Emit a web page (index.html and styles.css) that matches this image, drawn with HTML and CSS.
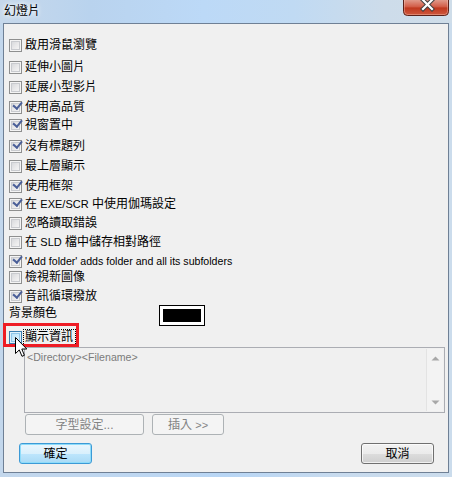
FILE: index.html
```html
<!DOCTYPE html>
<html lang="zh-Hant">
<head>
<meta charset="utf-8">
<title>幻燈片</title>
<link rel="stylesheet" href="styles.css">
</head>
<body>
<div class="window">
  <div class="titlebar">
    <span class="title">幻燈片</span>
    <div class="close">
      <svg width="46" height="16" viewBox="0 0 46 16">
        <defs>
          <linearGradient id="red" x1="0" y1="0" x2="0" y2="1">
            <stop offset="0" stop-color="#e2a293"/>
            <stop offset="0.45" stop-color="#d3604b"/>
            <stop offset="0.55" stop-color="#c0391f"/>
            <stop offset="1" stop-color="#cf5a3f"/>
          </linearGradient>
        </defs>
        <path d="M0.5 -1 V11.5 a4 4 0 0 0 4 4 H41.5 a4 4 0 0 0 4 -4 V-1" fill="url(#red)" stroke="#5b2119"/>
        <path d="M1.5 -1 V11.5 a3 3 0 0 0 3 3 H41.5 a3 3 0 0 0 3 -3 V-1" fill="none" stroke="rgba(255,220,210,0.35)"/>
        <path d="M20 0 L29 9 M29 0 L20 9" stroke="#3f3f3f" stroke-width="4.2" stroke-linecap="square"/>
        <path d="M20 0 L29 9 M29 0 L20 9" stroke="#ffffff" stroke-width="2.2" stroke-linecap="square"/>
      </svg>
    </div>
  </div>
  <div class="client">
    <div class="options">
      <div class="row"><span class="cb"></span><span class="txt">啟用滑鼠瀏覽</span></div>
      <div class="row"><span class="cb"></span><span class="txt">延伸小圖片</span></div>
      <div class="row"><span class="cb"></span><span class="txt">延展小型影片</span></div>
      <div class="row"><span class="cb checked"></span><span class="txt">使用高品質</span></div>
      <div class="row"><span class="cb checked"></span><span class="txt">視窗置中</span></div>
      <div class="row"><span class="cb checked"></span><span class="txt">沒有標題列</span></div>
      <div class="row"><span class="cb"></span><span class="txt">最上層顯示</span></div>
      <div class="row"><span class="cb checked"></span><span class="txt">使用框架</span></div>
      <div class="row"><span class="cb checked"></span><span class="txt">在 <span class="lat">EXE/SCR</span> 中使用伽瑪設定</span></div>
      <div class="row"><span class="cb"></span><span class="txt">忽略讀取錯誤</span></div>
      <div class="row"><span class="cb"></span><span class="txt">在 <span class="lat">SLD</span> 檔中儲存相對路徑</span></div>
      <div class="row"><span class="cb checked"></span><span class="txt lat">'Add folder' adds folder and all its subfolders</span></div>
      <div class="row"><span class="cb"></span><span class="txt">檢視新圖像</span></div>
      <div class="row"><span class="cb checked"></span><span class="txt">音訊循環撥放</span></div>
      <div class="row color-row"><span class="txt label">背景顏色</span><span class="swatch"></span></div>
      <div class="row hl-row">
        <span class="cb hover"></span><span class="txt focus">顯示資訊</span>
        <span class="redmark"></span>
        <svg class="cursor" width="13" height="21" viewBox="0 0 13 21">
          <path d="M0.5 0.5 L0.5 16.5 L4.3 12.9 L7 19.3 L9.4 18.3 L6.8 12 L11.8 12 Z" fill="#fff" stroke="#000" stroke-width="1" stroke-linejoin="miter"/>
        </svg>
      </div>
    </div>
    <div class="memo">
      <div class="memo-text">&lt;Directory&gt;&lt;Filename&gt;</div>
      <div class="scroll">
        <svg width="9" height="5" viewBox="0 0 9 5"><path d="M4.5 0.5 L8.5 4.5 L0.5 4.5 Z" fill="#a8a8a8"/></svg>
        <svg width="9" height="5" viewBox="0 0 9 5"><path d="M0.5 0.5 L8.5 0.5 L4.5 4.5 Z" fill="#a8a8a8"/></svg>
      </div>
    </div>
    <div class="tools">
      <button class="btn disabled font-btn">字型設定...</button>
      <button class="btn disabled insert-btn">插入 <span class="lat">&gt;&gt;</span></button>
    </div>
    <div class="actions">
      <button class="btn default">確定</button>
      <button class="btn">取消</button>
    </div>
  </div>
</div>
</body>
</html>
```

FILE: styles.css
```css
* { box-sizing: border-box; }

html, body {
  margin: 0;
  padding: 0;
}

body {
  width: 452px;
  height: 477px;
  overflow: hidden;
  font-family: "Liberation Sans", "Noto Sans CJK TC", sans-serif;
  font-size: 12px;
  color: #000;
  background: linear-gradient(to right, #c3d7ec 0%, #bdd7f2 35%, #b8d6f5 50%, #c8dbee 75%, #cbdcec 100%);
}

.window {
  display: flex;
  flex-direction: column;
  width: 452px;
  height: 477px;
}

.titlebar {
  height: 23px;
  display: flex;
  align-items: flex-start;
  background: linear-gradient(to right, #c6d8eb 0%, #b9d3ee 20%, #bcd9f7 45%, #c0daf3 65%, #cddcea 85%, #cfdde9 100%);
}

.title {
  padding-left: 4px;
  margin-top: 3px;
  line-height: 16px;
  font-size: 12px;
  color: #000;
  text-shadow: 0 0 4px #fff, 0 0 6px #fff;
}

.close {
  margin-left: auto;
  margin-right: 3px;
  width: 46px;
  height: 16px;
}
.close svg { display: block; }

.client {
  margin: 0 3px;
  height: 450px;
  border: 1px solid #6f8095;
  background: #f0f0f0;
  padding: 13px 0 0 5px;
  display: flex;
  flex-direction: column;
}

.options {
  display: grid;
  grid-template-rows: 22px 20px 20px 18px 21px 20px 20px 18px 19px 19px 19px 16px 19px 17px 23px 16px;
}

.row {
  display: flex;
  align-items: center;
  height: 16px;
  gap: 3px;
  align-self: start;
}

.txt {
  line-height: 16px;
  white-space: nowrap;
}

.lat {
  font-size: 11px;
}
.txt.lat { font-size: 10.6px; }

.cb {
  width: 13px;
  height: 13px;
  flex: none;
  border: 1px solid #8e8f8f;
  background: linear-gradient(135deg, #d0d2d6 0%, #eaeaeb 55%, #fafafa 100%);
  box-shadow: inset 0 0 0 1px #f4f4f4, inset 0 0 0 2px #c9cbcf;
  position: relative;
}
.cb.checked::after {
  content: "";
  position: absolute;
  left: 2px;
  top: 0px;
  width: 4px;
  height: 7px;
  border-right: 2px solid #4a5f98;
  border-bottom: 2px solid #4a5f98;
  transform: rotate(40deg);
  transform-origin: 100% 100%;
}
.cb.checked::after {
  left: 1px;
  top: -1px;
}

.cb.hover {
  border-color: #3c7fb1;
  background: linear-gradient(135deg, #b1dff9 0%, #cdebfb 55%, #eaf7fe 100%);
  box-shadow: inset 0 0 0 1px #def1fd, inset 0 0 0 2px #8fc6e9;
}

.color-row {
  align-items: flex-start;
  gap: 0;
}
.label {
  width: 150px;
}
.swatch {
  width: 46px;
  height: 21px;
  border: 1px solid #000;
  background: #000;
  box-shadow: inset 0 0 0 3px #fff;
}

.hl-row {
  position: relative;
  margin-top: 1px;
}
.focus {
  outline: 1px dotted #000;
  outline-offset: 0;
  padding: 0 2px 0 1px;
  margin-left: -1px;
  line-height: 15px;
}
.redmark {
  position: absolute;
  left: -6px;
  top: -6px;
  width: 76px;
  height: 24px;
  border: 3px solid #ee1c25;
  pointer-events: none;
}
.cursor {
  position: absolute;
  left: 6px;
  top: 8px;
}

.memo {
  margin: 3px 0 0 15px;
  width: 421px;
  height: 66px;
  border: 1px solid #abadb3;
  background: #f0f0f0;
  display: flex;
  justify-content: space-between;
}
.memo-text {
  padding: 3px 0 0 2px;
  font-size: 10.6px;
  line-height: 13px;
  color: #7b7b7b;
}
.scroll {
  width: 17px;
  margin: 1px 1px 1px 0;
  background: #f3f3f3;
  border-left: 1px solid #e3e3e3;
  display: flex;
  flex-direction: column;
  align-items: center;
  justify-content: space-between;
  padding: 7px 0 6px;
}
.scroll svg { display: block; }

.tools {
  display: flex;
  gap: 8px;
  margin: 1px 0 0 16px;
}

.btn {
  font-family: "Liberation Sans", "Noto Sans CJK TC", sans-serif;
  font-size: 12px;
  height: 21px;
  padding: 0;
  line-height: 18px;
  border-radius: 3px;
  border: 1px solid #707070;
  background: linear-gradient(#f2f2f2 0%, #ebebeb 50%, #dddddd 50%, #cfcfcf 100%);
  box-shadow: inset 0 0 0 1px rgba(255,255,255,0.7);
  color: #000;
  width: 73px;
}
.btn.disabled {
  border-color: #adb2b5;
  background: #f4f4f4;
  box-shadow: none;
  color: #838383;
}
.font-btn { width: 119px; }
.insert-btn { width: 72px; }

.btn.default {
  border-color: #3c9ad6;
  background: linear-gradient(#eaf6fd 0%, #d9f0fc 50%, #bee6fd 50%, #a9daf5 100%);
  box-shadow: inset 0 0 0 1px #8edcfa, 0 0 0 0 transparent;
}

.actions {
  display: flex;
  justify-content: space-between;
  margin: 8px 14px 0 10px;
}
```
